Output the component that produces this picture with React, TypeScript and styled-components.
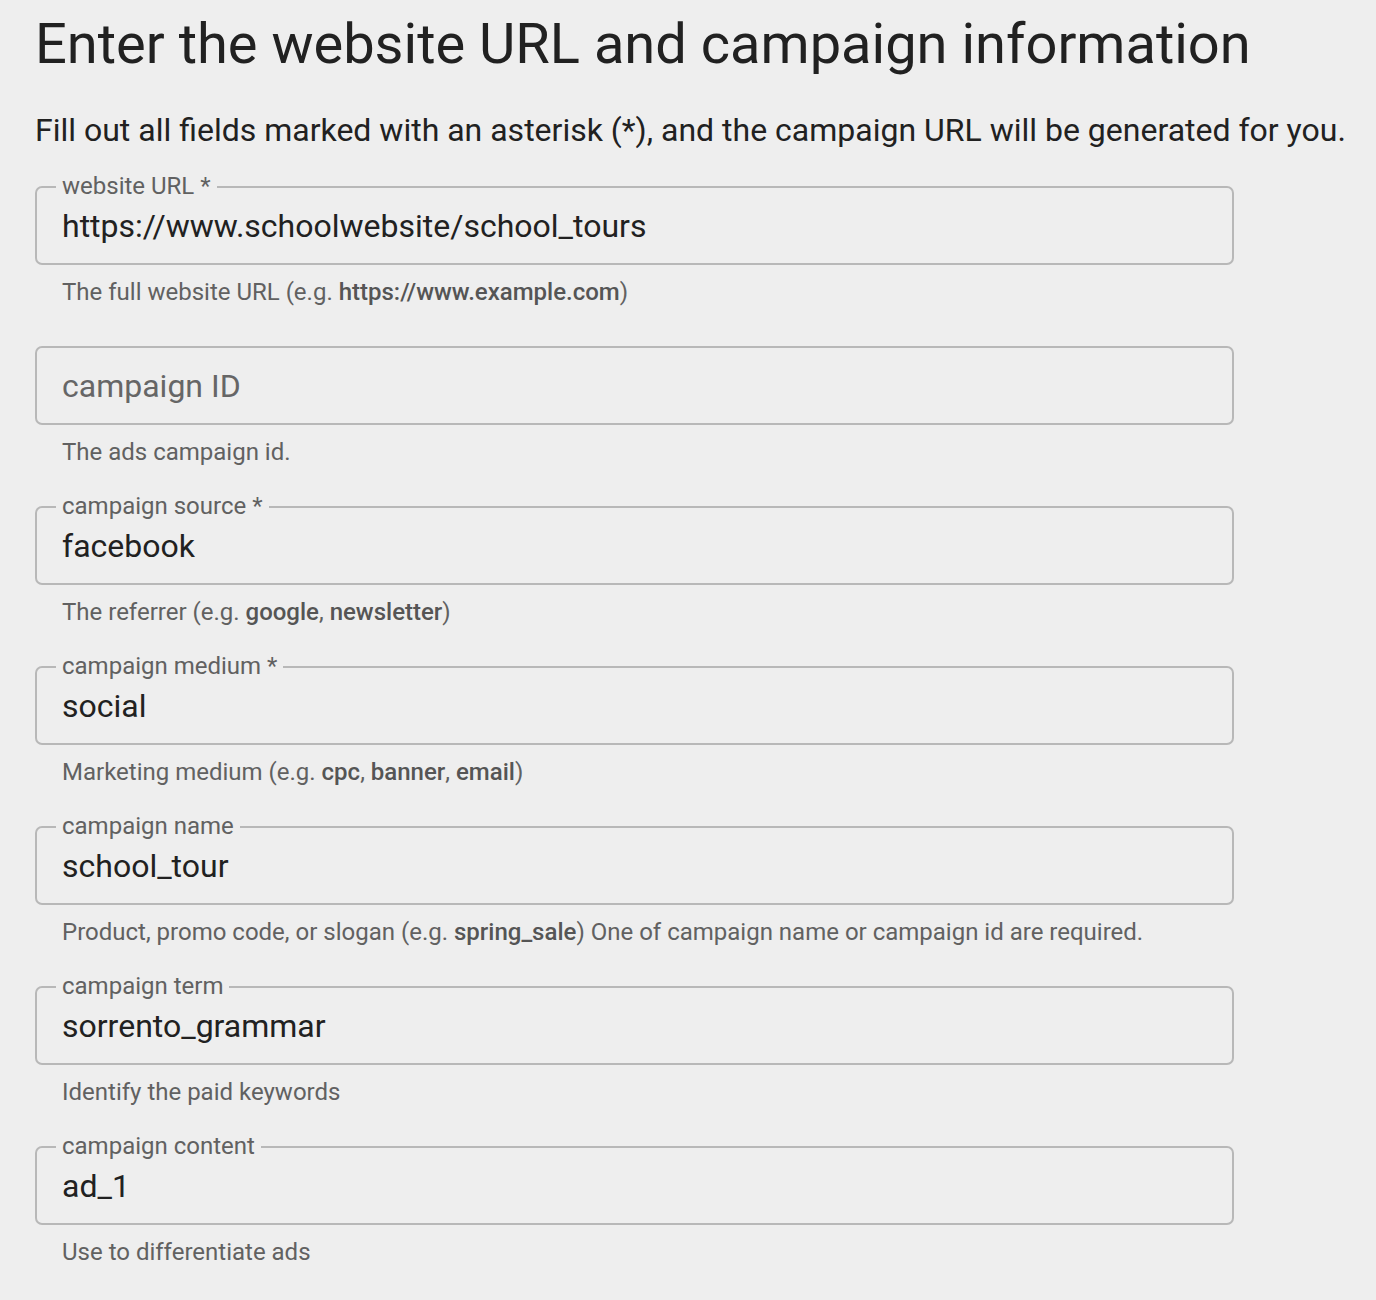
import React from "react";
import styled, { createGlobalStyle } from "styled-components";

const Global = createGlobalStyle`
  html, body { margin: 0; padding: 0; background: #eeeeee; }
  body { font-family: Roboto, "Noto Sans", sans-serif; color: #212121; }
`;

const Page = styled.div`
  padding: 8px 20px 20px 35px;
  width: 1376px;
  box-sizing: border-box;
`;

const Title = styled.h1`
  margin: 0;
  font-size: 56px;
  font-weight: 400;
  line-height: 72px;
  color: #212121;
`;

const Intro = styled.p`
  margin: 30px 0 0 0;
  font-size: 32px;
  line-height: 40px;
  color: #212121;
  white-space: nowrap;
`;

const Fields = styled.div`
  margin-top: 36px;
  display: flex;
  flex-direction: column;
  width: 1199px;
`;

const Field = styled.div`
  display: flex;
  flex-direction: column;
  height: 160px;
`;

const Box = styled.div`
  position: relative;
  height: 79px;
  box-sizing: border-box;
  border: 2px solid #b8b8b8;
  border-radius: 7px;
  display: flex;
  align-items: center;
  padding: 0 25px;
`;

const FloatLabel = styled.span`
  position: absolute;
  left: 19px;
  top: -16px;
  padding: 0 6px;
  background: #eeeeee;
  font-size: 24px;
  line-height: 28px;
  color: #616161;
`;

const Value = styled.span<{ $placeholder?: boolean }>`
  font-size: 32px;
  line-height: 38px;
  color: ${(p) => (p.$placeholder ? "#666666" : "#212121")};
`;

const Helper = styled.div`
  margin-top: 13px;
  padding-left: 27px;
  font-size: 24px;
  line-height: 28px;
  color: #616161;
  b {
    font-weight: 500;
    color: #555555;
  }
`;

type F = {
  label?: string;
  value?: string;
  placeholder?: string;
  helper: React.ReactNode;
};

const fields: F[] = [
  {
    label: "website URL *",
    value: "https://www.schoolwebsite/school_tours",
    helper: (
      <>
        The full website URL (e.g. <b>https://www.example.com</b>)
      </>
    ),
  },
  { placeholder: "campaign ID", helper: <>The ads campaign id.</> },
  {
    label: "campaign source *",
    value: "facebook",
    helper: (
      <>
        The referrer (e.g. <b>google</b>, <b>newsletter</b>)
      </>
    ),
  },
  {
    label: "campaign medium *",
    value: "social",
    helper: (
      <>
        Marketing medium (e.g. <b>cpc</b>, <b>banner</b>, <b>email</b>)
      </>
    ),
  },
  {
    label: "campaign name",
    value: "school_tour",
    helper: (
      <>
        Product, promo code, or slogan (e.g. <b>spring_sale</b>) One of campaign name or campaign id are required.
      </>
    ),
  },
  {
    label: "campaign term",
    value: "sorrento_grammar",
    helper: <>Identify the paid keywords</>,
  },
  {
    label: "campaign content",
    value: "ad_1",
    helper: <>Use to differentiate ads</>,
  },
];

export default function App() {
  return (
    <Page>
      <Global />
      <Title>Enter the website URL and campaign information</Title>
      <Intro>
        Fill out all fields marked with an asterisk (*), and the campaign URL will be generated for you.
      </Intro>
      <Fields>
        {fields.map((f, i) => (
          <Field key={i}>
            <Box>
              {f.label && <FloatLabel>{f.label}</FloatLabel>}
              {f.value ? (
                <Value>{f.value}</Value>
              ) : (
                <Value $placeholder>{f.placeholder}</Value>
              )}
            </Box>
            <Helper>{f.helper}</Helper>
          </Field>
        ))}
      </Fields>
    </Page>
  );
}
